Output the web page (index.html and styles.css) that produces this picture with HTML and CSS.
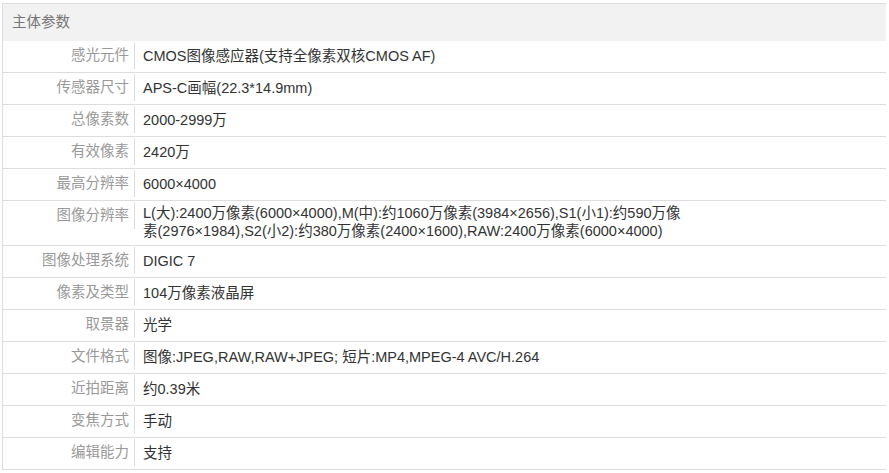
FILE: index.html
```html
<!DOCTYPE html>
<html lang="zh">
<head>
<meta charset="utf-8">
<title>主体参数</title>
<link rel="stylesheet" href="styles.css">
</head>
<body>
<div class="page">
  <div class="params">
    <div class="params-head">主体参数</div>
    <div class="row"><div class="label">感光元件</div><div class="value">CMOS图像感应器(支持全像素双核CMOS AF)</div></div>
    <div class="row"><div class="label">传感器尺寸</div><div class="value">APS-C画幅(22.3*14.9mm)</div></div>
    <div class="row"><div class="label">总像素数</div><div class="value">2000-2999万</div></div>
    <div class="row"><div class="label">有效像素</div><div class="value">2420万</div></div>
    <div class="row"><div class="label">最高分辨率</div><div class="value">6000×4000</div></div>
    <div class="row multi"><div class="label">图像分辨率</div><div class="value">L(大):2400万像素(6000×4000),M(中):约1060万像素(3984×2656),S1(小1):约590万像素(2976×1984),S2(小2):约380万像素(2400×1600),RAW:2400万像素(6000×4000)</div></div>
    <div class="row"><div class="label">图像处理系统</div><div class="value">DIGIC 7</div></div>
    <div class="row"><div class="label">像素及类型</div><div class="value">104万像素液晶屏</div></div>
    <div class="row"><div class="label">取景器</div><div class="value">光学</div></div>
    <div class="row"><div class="label">文件格式</div><div class="value">图像:JPEG,RAW,RAW+JPEG; 短片:MP4,MPEG-4 AVC/H.264</div></div>
    <div class="row"><div class="label">近拍距离</div><div class="value">约0.39米</div></div>
    <div class="row"><div class="label">变焦方式</div><div class="value">手动</div></div>
    <div class="row"><div class="label">编辑能力</div><div class="value">支持</div></div>
  </div>
</div>
</body>
</html>
```
FILE: styles.css
```css
html, body {
  margin: 0;
  padding: 0;
  background: #fff;
}
body {
  font-family: "Liberation Sans", "Noto Sans CJK SC", sans-serif;
  font-size: 14.5px;
  color: #333;
}
.page {
  padding: 3px 3px 10px 2px;
}
.params {
  border-left: 1px solid #ddd;
  border-top: 1px solid #ddd;
}
.params-head {
  height: 37px;
  line-height: 37px;
  background: #f2f2f2;
  color: #777;
  padding-left: 9px;
}
.row {
  display: flex;
  align-items: flex-start;
  border-bottom: 1px solid #ddd;
}
.label {
  flex: 0 0 126px;
  height: 27px;
  line-height: 27px;
  margin: 1px 0 3px;
  padding-right: 5px;
  text-align: right;
  color: #999;
  border-right: 1px solid #ddd;
}
.value {
  flex: 1;
  max-width: 545px;
  padding: 6px 8px 7px;
  line-height: 18px;
}
.row.multi .value {
  padding: 3px 8px 5px;
}
```
